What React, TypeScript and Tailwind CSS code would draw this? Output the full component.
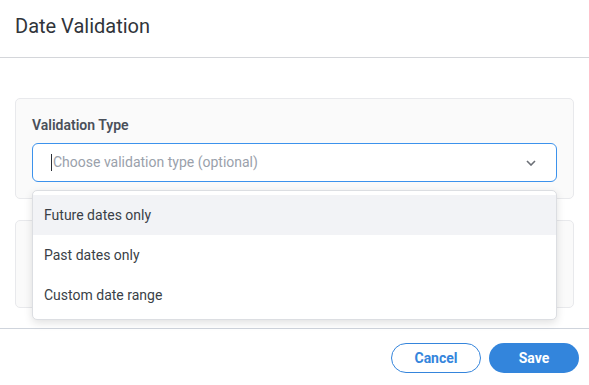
const options = ['Future dates only', 'Past dates only', 'Custom date range'];

export default function App() {
  const active = 0;

  return (
    <div
      className="w-[589px] h-[385px] bg-white flex flex-col overflow-hidden"
      style={{ fontFamily: 'Roboto, "Liberation Sans", sans-serif' }}
    >
      {/* Header */}
      <div className="h-[58px] shrink-0 border-b border-[#d4d6da] px-[15px] flex items-center">
        <h1 className="text-[20px] text-[#30343a] leading-none pb-[5px]">Date Validation</h1>
      </div>

      {/* Body */}
      <div className="flex-1 px-[15px] pt-[40px] flex flex-col gap-[21px]">
        <div className="relative bg-[#fafafa] border border-[#e8e9ec] rounded-[5px] px-[16px] pt-[16px] pb-[16px]">
          <label className="block text-[14px] font-semibold text-[#4a505a] leading-[20px] mb-[8px]">
            Validation Type
          </label>
          <div className="h-[39px] bg-white border border-[#3c92ec] rounded-[6px] flex items-center pl-[18px] pr-[20px]">
            <span className="w-px h-[17px] bg-[#2b2f36] mr-px" />
            <span className="flex-1 text-[14px] text-[#9aa1ab]">Choose validation type (optional)</span>
            <svg width="10" height="6" viewBox="0 0 10 6" className="text-[#6b6f76]">
              <polyline points="1,1 5,5 9,1" fill="none" stroke="currentColor" strokeWidth="1.6" />
            </svg>
          </div>

          {/* Dropdown menu */}
          <div className="absolute left-[16px] right-[16px] top-[91px] z-10 bg-white border border-[#dcdee2] rounded-[5px] shadow-[0_3px_8px_rgba(0,0,0,0.12)] pt-[4px] pb-[4px]">
            {options.map((opt, i) => (
              <div
                key={opt}
                className={`h-[40px] flex items-center px-[11px] text-[14px] text-[#3a3f47] ${
                  i === active ? 'bg-[#f2f3f6]' : ''
                }`}
              >
                {opt}
              </div>
            ))}
          </div>
        </div>

        <div className="h-[88px] bg-[#fafafa] border border-[#e8e9ec] rounded-[5px]" />
      </div>

      {/* Footer */}
      <div className="h-[57px] shrink-0 border-t border-[#cfd4dc] flex items-start justify-end gap-[8px] pt-[14px] pr-[10px]">
        <button className="w-[90px] h-[30px] rounded-full border border-[#3585dc] text-[#3585dc] text-[14px] font-bold">
          Cancel
        </button>
        <button className="w-[90px] h-[30px] rounded-full bg-[#3385dc] text-white text-[14px] font-bold">
          Save
        </button>
      </div>
    </div>
  );
}
